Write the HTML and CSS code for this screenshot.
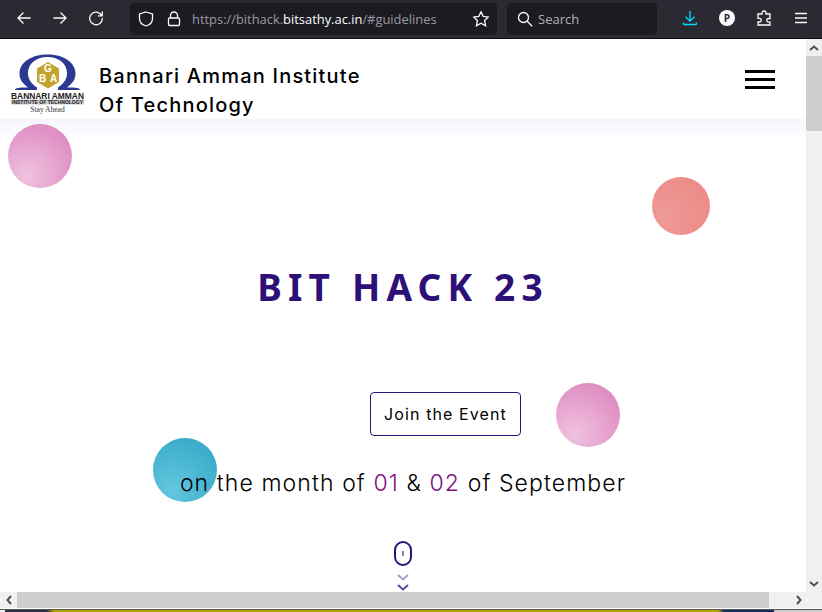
FILE: index.html
```html
<!DOCTYPE html>
<html lang="en">

<head>
    <meta charset="UTF-8">
    <title>BIT HACK 23</title>
    <link rel="stylesheet" href="styles.css">
</head>

<body>
    <div class="toolbar">
        <div class="nav">
            <svg class="icon" viewBox="0 0 16 16"><path d="M14.500 8H2M7.500 2.500 2 8l5.500 5.500"/></svg>
            <svg class="icon" viewBox="0 0 16 16"><path d="M1.500 8H14M8.500 2.500 14 8l-5.500 5.500"/></svg>
            <svg class="icon" viewBox="0 0 16 16"><path d="M13.600 5.500A6.300 6.300 0 1 0 14.300 8M14.300 1.500v4.300H10"/></svg>
        </div>
        <div class="urlbar">
            <svg class="icon" viewBox="0 0 16 16"><path d="M8 1 14.500 3v4.500C14.500 11.500 11.500 14 8 15 4.500 14 1.500 11.500 1.500 7.500V3z"/></svg>
            <svg class="icon lock" viewBox="0 0 16 16"><path d="M4.500 7V4.500a3.500 3.500 0 0 1 7 0V7M3.500 7h9a1 1 0 0 1 1 1v5.500a1 1 0 0 1-1 1h-9a1 1 0 0 1-1-1V8a1 1 0 0 1 1-1z"/></svg>
            <span class="url">https://bithack.<b>bitsathy.ac.in</b>/#guidelines</span>
            <svg class="icon star" viewBox="0 0 16 16"><path d="M8 .800 10.200 5.400 15.400 6 11.600 9.500 12.600 14.800 8 12.200 3.400 14.800 4.400 9.500 .600 6 5.800 5.400z"/></svg>
        </div>
        <div class="searchbar">
            <svg class="icon" viewBox="0 0 16 16"><circle cx="6.500" cy="6.500" r="5"/><path d="m10.200 10.200 5 5"/></svg>
            <span>Search</span>
        </div>
        <div class="tools">
            <svg class="icon download" viewBox="0 0 16 16"><path d="M8 1v10M3.500 6.800 8 11.200l4.500-4.400M1.500 12.500v1.200a.8.800 0 0 0 .8.800h11.400a.8.800 0 0 0 .8-.8v-1.200"/></svg>
            <span class="pocket">P</span>
            <svg class="icon" viewBox="0 0 16 16"><path d="M6 4V3a2 2 0 0 1 4 0v1h4v4.500h-1.500a1.800 1.800 0 0 0 0 3.600H14V15H2v-3h1.500a1.800 1.800 0 0 0 0-3.600H2V4z"/></svg>
            <svg class="icon" viewBox="0 0 16 16"><path d="M2 3.500h12M2 8h12M2 12.500h12"/></svg>
        </div>
    </div>

    <div class="viewport">
        <div class="page">
            <div class="header">
                <div class="brand">
                    <svg class="logo" viewBox="0 0 76 62">
                        <path class="omega" d="M5 38C5 36 9 35.500 18 35.500 12 31 9.500 27 9.500 21.500 9.500 10 22 2.500 37.500 2.500 53 2.500 65.500 10 65.500 21.500 65.500 27 63 31 57 35.500 66 35.500 70 36 70 38H48V35.500C53 32 57 28 57 21 57 11 48 5 37.500 5 27 5 18 11 18 21 18 28 22 32 27 35.500V38Z" />
                        <path class="cube" d="M38 10 49 16.500V30L38 36.500 27 30V16.500Z" />
                        <text class="cube-text" x="38" y="20">G</text>
                        <text class="cube-text" x="32.500" y="30">B</text>
                        <text class="cube-text" x="43.500" y="30">A</text>
                        <text class="logo-name" x="37.500" y="46.500" textLength="73" lengthAdjust="spacingAndGlyphs">BANNARI AMMAN</text>
                        <rect class="logo-band" x="1" y="47.500" width="73" height="5" />
                        <text class="logo-inst" x="37.500" y="51.700" textLength="71" lengthAdjust="spacingAndGlyphs">INSTITUTE OF TECHNOLOGY</text>
                        <text class="logo-tag" x="37.500" y="60">Stay Ahead</text>
                    </svg>
                    <div class="college">Bannari Amman Institute<br>Of Technology</div>
                </div>
                <div class="burger"><span></span><span></span><span></span></div>
            </div>

            <div class="hero">
                <h1>BIT HACK 23</h1>
                <a class="join" href="#">Join the Event</a>
                <p class="when">on the month of <span>01</span> &amp; <span>02</span> of September</p>
                <div class="mouse"><span></span></div>
                <div class="chevrons">
                    <svg viewBox="0 0 12 7" class="faded"><path d="M1 1 6 5.500 11 1"/></svg>
                    <svg viewBox="0 0 12 7"><path d="M1 1 6 5.500 11 1"/></svg>
                </div>
            </div>

            <div class="ball pink ball-a"></div>
            <div class="ball red ball-b"></div>
            <div class="ball pink ball-c"></div>
            <div class="ball blue ball-d"></div>
        </div>

        <div class="vscroll">
            <div class="sbtn"><svg viewBox="0 0 10 6"><path d="M1 5 5 1.500 9 5"/></svg></div>
            <div class="vthumb"></div>
            <div class="vtrack"></div>
            <div class="sbtn"><svg viewBox="0 0 10 6"><path d="M1 1 5 4.500 9 1"/></svg></div>
        </div>
    </div>

    <div class="hscroll">
        <div class="sbtn wide"><svg viewBox="0 0 6 10"><path d="M5 1 1.500 5 5 9"/></svg></div>
        <div class="hthumb"></div>
        <div class="sbtn rest"><svg viewBox="0 0 6 10"><path d="M1 1 4.500 5 1 9"/></svg></div>
    </div>
    <div class="strip"></div>
</body>

</html>
```

FILE: styles.css
```css
* {
    margin: 0;
    padding: 0;
    box-sizing: border-box;
}
html,
body {
    width: 822px;
    height: 612px;
    overflow: hidden;
}
body {
    display: flex;
    flex-direction: column;
    background: #fff;
    font-family: "Open Sans", sans-serif;
}

/* browser bar */
.toolbar {
    height: 39px;
    flex: none;
    display: flex;
    align-items: center;
    padding: 0 0 3px 16px;
    background: #2b2a33;
    border-bottom: 1px solid #0c0c0d;
}
.icon {
    width: 16px;
    height: 16px;
    flex: none;
    fill: none;
    stroke: #fbfbfe;
    stroke-width: 1.3;
}
.nav {
    display: flex;
    gap: 20px;
    width: 114px;
}
.urlbar {
    width: 367px;
    height: 32px;
    margin-top: 3px;
    display: flex;
    align-items: center;
    padding: 0 8px;
    background: #1c1b22;
    border-radius: 4px;
}
.lock {
    margin-left: 12px;
}
.url {
    margin-left: 10px;
    flex: 1;
    color: #9a99a0;
    font-size: 12.900px;
    white-space: nowrap;
}
.url b {
    font-weight: 400;
    color: #fbfbfe;
}
.searchbar {
    width: 150px;
    height: 32px;
    margin: 3px 0 0 10px;
    display: flex;
    align-items: center;
    gap: 5px;
    padding: 0 10px;
    background: #1c1b22;
    border-radius: 4px;
    color: #b1b1b5;
    font-size: 13px;
}
.tools {
    margin-left: 25px;
    display: flex;
    align-items: center;
    gap: 21px;
}
.download {
    stroke: #00ddff;
}
.pocket {
    width: 16px;
    height: 16px;
    border-radius: 50%;
    background: #fbfbfe;
    color: #2b2a33;
    font-size: 10px;
    font-weight: 700;
    line-height: 16px;
    text-align: center;
}

/* page */
.viewport {
    flex: 1;
    min-height: 0;
    display: flex;
}
.page {
    flex: 1;
    position: relative;
    overflow: hidden;
    background: linear-gradient(#f6f5fd, #fff 22px) 0 80px no-repeat;
    color: #000;
    font-family: Inter, "Liberation Sans", sans-serif;
}
.header {
    height: 80px;
    display: flex;
    justify-content: space-between;
    align-items: center;
    padding: 0 31px 0 10px;
    background: #fff;
}
.brand {
    height: 80px;
    display: flex;
    align-items: flex-start;
    gap: 13px;
}
.logo {
    width: 76px;
    height: 62px;
    margin-top: 13px;
}
.omega {
    fill: #2b3990;
}
.cube {
    fill: #c3a32f;
}
.cube-text {
    font: 700 10px "Liberation Sans", sans-serif;
    fill: #fff;
    text-anchor: middle;
}
.logo-name,
.logo-inst,
.logo-tag {
    text-anchor: middle;
}
.logo-name {
    font: 700 8.500px "Liberation Sans", sans-serif;
    fill: #222;
}
.logo-band {
    fill: #c9c9c9;
}
.logo-inst {
    font: 700 4.600px "Liberation Sans", sans-serif;
    fill: #222;
}
.logo-tag {
    font: 7.500px "Liberation Serif", serif;
    fill: #333;
}
.college {
    margin-top: 23px;
    font-size: 20px;
    font-weight: 500;
    line-height: 29px;
    letter-spacing: 1.200px;
}
.burger {
    width: 30px;
    display: flex;
    flex-direction: column;
    gap: 5px;
}
.burger span {
    height: 3px;
    background: #000;
}
.hero {
    display: flex;
    flex-direction: column;
    align-items: center;
}
h1 {
    margin-top: 145px;
    color: #2d1178;
    font-family: "Noto Sans", sans-serif;
    font-size: 37px;
    font-weight: 700;
    line-height: 46px;
    letter-spacing: 6.200px;
}
.join {
    margin: 82px 0 0 85px;
    width: 151px;
    height: 44px;
    border: 1px solid #2d1178;
    border-radius: 4px;
    color: #000;
    font-size: 16px;
    line-height: 42px;
    text-align: center;
    letter-spacing: 1.100px;
    text-decoration: none;
}
.when {
    position: relative;
    z-index: 1;
    margin-top: 32px;
    font-size: 23px;
    line-height: 30px;
    letter-spacing: 1.100px;
    font-weight: 300;
}
.when span {
    color: #800f80;
}
.mouse {
    margin-top: 43px;
    width: 18px;
    height: 25px;
    border: 2px solid #2d1178;
    border-radius: 9px;
    display: flex;
    justify-content: center;
    padding-top: 8px;
}
.mouse span {
    width: 2px;
    height: 5px;
    background: #8a7db8;
}
.chevrons {
    margin-top: 8px;
    display: flex;
    flex-direction: column;
    gap: 3px;
}
.chevrons svg {
    display: block;
    width: 12px;
    height: 7px;
    fill: none;
    stroke: #5b4a98;
    stroke-width: 2;
}
.chevrons .faded {
    stroke: #a79dcb;
}

/* floating circles */
.ball {
    position: absolute;
    border-radius: 50%;
}
.pink {
    width: 64px;
    height: 64px;
    background: radial-gradient(circle at 30% 80%, #efc2e0, #e08fc3 75%);
}
.red {
    width: 58px;
    height: 58px;
    background: radial-gradient(circle at 20% 70%, #ee9a96, #ec8b88 80%);
}
.blue {
    width: 64px;
    height: 64px;
    background: radial-gradient(circle at 30% 80%, #63c7de, #3badca 75%);
}
.ball-a {
    left: 8px;
    top: 85px;
}
.ball-b {
    left: 652px;
    top: 138px;
}
.ball-c {
    left: 556px;
    top: 344px;
}
.ball-d {
    left: 153px;
    top: 399px;
}

/* scrollbars */
.vscroll {
    width: 16px;
    flex: none;
    display: flex;
    flex-direction: column;
    background: #f0f0f0;
}
.sbtn {
    height: 17px;
    display: flex;
    align-items: center;
    justify-content: center;
    background: #f0f0f0;
    flex: none;
}
.sbtn svg {
    width: 10px;
    height: 6px;
    fill: none;
    stroke: #505050;
    stroke-width: 2;
}
.vthumb {
    height: 75px;
    background: #cdcdcd;
}
.vtrack {
    flex: 1;
}
.hscroll {
    height: 16px;
    flex: none;
    display: flex;
    background: #f0f0f0;
}
.hscroll .sbtn {
    height: 16px;
}
.hscroll .sbtn svg {
    width: 6px;
    height: 10px;
}
.wide {
    width: 17px;
}
.hthumb {
    width: 752px;
    background: #cdcdcd;
}
.rest {
    flex: 1;
    padding-right: 16px;
}
.rest svg {
    margin-left: 22px;
}
.strip {
    height: 3px;
    flex: none;
    margin-top: 1px;
    border-top: 1px solid #555;
    background: linear-gradient(90deg, #f0f0f0 5px, #2a2f45 5px, #2a2f45 47px, #b8a400 54px, #b8a400 718px, #122a5c 724px, #122a5c 774px, #ccc 774px);
}
```
